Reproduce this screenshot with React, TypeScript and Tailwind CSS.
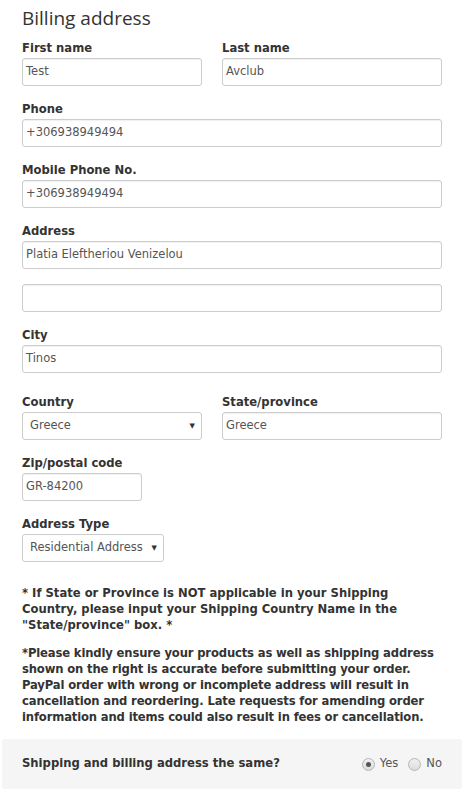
import React from 'react';

const font = "font-['DejaVu_Sans',Verdana,sans-serif]";

const Label = ({ children }: any) => (
    <label className="block text-[11.6px] leading-[16px] font-bold text-[#333]">{children}</label>
);

const TextInput = ({ value, className = 'w-full' }: any) => (
    <div className={`${className} h-[28px] mt-[2px] flex items-center px-[3px] border border-[#ccc] rounded-[3px] bg-white text-[11.5px] text-[#555] shadow-[inset_0_1px_1px_rgba(0,0,0,0.06)]`}>
        {value}
    </div>
);

const SelectBox = ({ value, className = 'w-full' }: any) => (
    <div className={`${className} h-[28px] mt-[2px] flex items-center justify-between pl-[7px] pr-[6px] border border-[#ccc] rounded-[3px] bg-white text-[11.5px] text-[#555]`}>
        <span>{value}</span>
        <span className="text-[7px] text-[#333]">▼</span>
    </div>
);

const Radio = ({ checked }: any) => (
    <span className="w-[13px] h-[13px] rounded-full border border-[#b5b5b5] bg-gradient-to-b from-[#f0f0f0] to-[#dcdcdc] flex items-center justify-center">
        {checked && <span className="w-[5px] h-[5px] rounded-full bg-[#555]" />}
    </span>
);

export default function App() {
    return (
        <div className={`${font} bg-white min-h-[797px]`}>
            <div className="ml-[2px] w-[460px]">
                <div className="px-5">
                    <h2 className="font-['Open_Sans',sans-serif] text-[19px] leading-[24px] text-[#333] pt-[6px] pb-[10px]">Billing address</h2>

                    <div className="grid grid-cols-[180px_1fr] gap-x-[20px]">
                        <div>
                            <Label>First name</Label>
                            <TextInput value="Test" />
                        </div>
                        <div>
                            <Label>Last name</Label>
                            <TextInput value="Avclub" />
                        </div>
                    </div>

                    <div className="mt-[15px]">
                        <Label>Phone</Label>
                        <TextInput value="+306938949494" />
                    </div>

                    <div className="mt-[15px]">
                        <Label>Mobile Phone No.</Label>
                        <TextInput value="+306938949494" />
                    </div>

                    <div className="mt-[15px]">
                        <Label>Address</Label>
                        <TextInput value="Platia Eleftheriou Venizelou" />
                        <div className="mt-[15px]">
                            <TextInput value="" />
                        </div>
                    </div>

                    <div className="mt-[15px]">
                        <Label>City</Label>
                        <TextInput value="Tinos" />
                    </div>

                    <div className="grid grid-cols-[180px_1fr] gap-x-[20px] mt-[21px]">
                        <div>
                            <Label>Country</Label>
                            <SelectBox value="Greece" />
                        </div>
                        <div>
                            <Label>State/province</Label>
                            <TextInput value="Greece" />
                        </div>
                    </div>

                    <div className="mt-[15px]">
                        <Label>Zip/postal code</Label>
                        <TextInput value="GR-84200" className="w-[120px]" />
                    </div>

                    <div className="mt-[15px]">
                        <Label>Address Type</Label>
                        <SelectBox value="Residential Address" className="w-[142px]" />
                    </div>

                    <div className="mt-[23px] text-[11.6px] leading-[16px] font-bold text-[#333]">
                        <p>* If State or Province is NOT applicable in your Shipping Country, please input your Shipping Country Name in the "State/province" box. *</p>
                        <p className="mt-[12px] tracking-[-0.15px]">*Please kindly ensure your products as well as shipping address shown on the right is accurate before submitting your order. PayPal order with wrong or incomplete address will result in cancellation and reordering. Late requests for amending order information and items could also result in fees or cancellation.</p>
                    </div>
                </div>

                <div className="mt-[14px] h-[50px] bg-[#f5f5f5] rounded-[3px] flex items-center justify-between pl-5 pr-5">
                    <span className="text-[11.6px] font-bold text-[#333]">Shipping and billing address the same?</span>
                    <div className="flex items-center text-[11.5px] text-[#555]">
                        <Radio checked />
                        <span className="ml-[5px]">Yes</span>
                        <span className="ml-[10px]"><Radio /></span>
                        <span className="ml-[5px]">No</span>
                    </div>
                </div>
            </div>
        </div>
    );
}
